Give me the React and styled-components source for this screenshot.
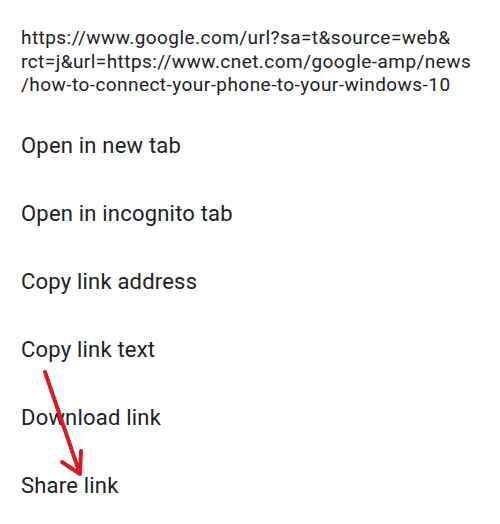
import React from "react";
import styled, { createGlobalStyle } from "styled-components";

const GlobalStyle = createGlobalStyle`
  html, body {
    margin: 0;
    padding: 0;
    background: #ffffff;
  }
  body {
    font-family: Roboto, "Noto Sans", sans-serif;
    color: #202124;
  }
`;

const urlLines = [
  "https://www.google.com/url?sa=t&source=web&",
  "rct=j&url=https://www.cnet.com/google-amp/news",
  "/how-to-connect-your-phone-to-your-windows-10",
];

const menuItems = [
  "Open in new tab",
  "Open in incognito tab",
  "Copy link address",
  "Copy link text",
  "Download link",
  "Share link",
];

const App = () => {
  return (
    <Sheet>
      <GlobalStyle />
      <UrlBlock>
        {urlLines.map((line) => (
          <UrlLine key={line}>{line}</UrlLine>
        ))}
      </UrlBlock>
      <Menu>
        {menuItems.map((item) => (
          <MenuItem key={item}>{item}</MenuItem>
        ))}
      </Menu>
      <Arrow width="500" height="524" viewBox="0 0 500 524">
        <path
          d="M45 372 L80 474 M62 462 L80 474 L81 451"
          fill="none"
          stroke="#d91c24"
          strokeWidth="4"
          strokeLinecap="round"
          strokeLinejoin="round"
        />
      </Arrow>
    </Sheet>
  );
};
export default App;

const Sheet = styled.div`
  position: relative;
  width: 500px;
  height: 524px;
  overflow: hidden;
  background: #ffffff;
  display: flex;
  flex-direction: column;
`;

const UrlBlock = styled.div`
  padding: 26px 0 0 21px;
  font-size: 19px;
  letter-spacing: 0.45px;
  line-height: 23.5px;
  color: #202124;
`;

const UrlLine = styled.div`
  white-space: nowrap;
`;

const Menu = styled.div`
  display: flex;
  flex-direction: column;
  margin-top: 15px;
`;

const MenuItem = styled.div`
  height: 68px;
  display: flex;
  align-items: center;
  padding-left: 21px;
  font-size: 22px;
  letter-spacing: 0.2px;
  color: #202124;
`;

const Arrow = styled.svg`
  position: absolute;
  top: 0;
  left: 0;
  pointer-events: none;
`;
